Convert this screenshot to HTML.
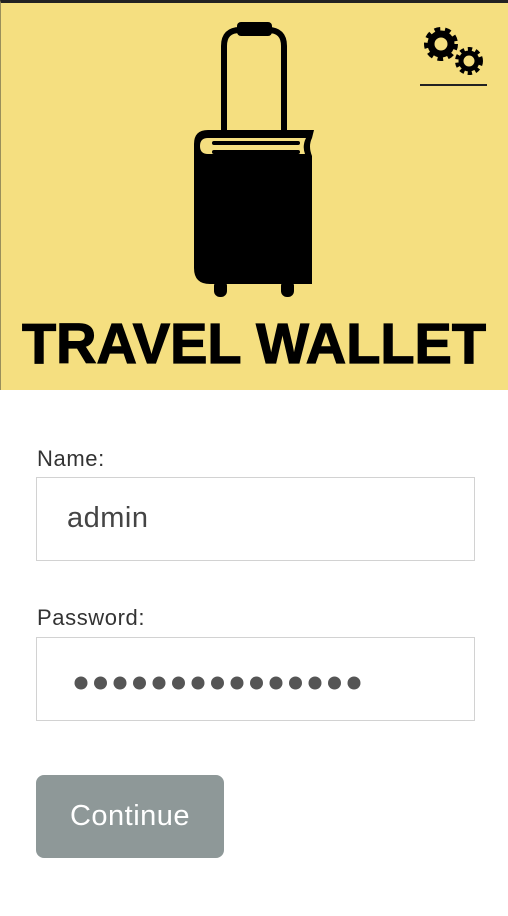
<!DOCTYPE html>
<html><head><style>
html,body{margin:0;padding:0;background:#fff;width:508px;height:916px;overflow:hidden;font-family:"Liberation Sans",sans-serif}
.hdr{position:absolute;left:0;top:0;width:508px;height:390px;background:#f5df80;border-top:3px solid #222;border-left:1px solid #9a8f5a;box-sizing:border-box}
.lbl{position:absolute;left:37px;font-size:22px;letter-spacing:0.6px;color:#333}
.inp{position:absolute;left:36px;width:439px;height:84px;border:1px solid #d2d2d2;box-sizing:border-box;background:#fff}
.btn{position:absolute;left:36px;top:775px;width:188px;height:83px;background:#8e9898;border-radius:8px;color:#fff;font-size:29px;letter-spacing:0.5px;text-align:center;line-height:83px}
</style></head><body>
<div class="hdr"></div>
<svg style="position:absolute;left:0;top:0" width="508" height="390">
  <path d="M224 130 V46 Q224 30 240 30 H268 Q284 30 284 46 V130" fill="none" stroke="#000" stroke-width="6"/>
  <rect x="237" y="22" width="35" height="14" rx="4" fill="#000"/>
  <path d="M200 130 H314 L312 138 Q308 146 312 156 V284 H210 Q194 284 194 268 V144 Q194 130 208 130 Z" fill="#000"/>
  <path d="M208 138 H306 Q302 146 305 154 H208 Q200 154 200 146 Q200 138 208 138 Z" fill="#f5df80"/>
  <line x1="214" y1="143" x2="298" y2="143" stroke="#000" stroke-width="4" stroke-linecap="round"/>
  <line x1="214" y1="152" x2="298" y2="152" stroke="#000" stroke-width="4" stroke-linecap="round"/>
  <rect x="214" y="280" width="13" height="17" rx="6" fill="#000"/>
  <rect x="281" y="280" width="13" height="17" rx="6" fill="#000"/>
  <g transform="translate(441,44)">
    <circle r="13" fill="none" stroke="#000" stroke-width="8" stroke-dasharray="5 4.2"/>
    <circle r="10" fill="none" stroke="#000" stroke-width="7"/>
  </g>
  <g transform="translate(469,61)">
    <circle r="11" fill="none" stroke="#000" stroke-width="6" stroke-dasharray="4 3.2"/>
    <circle r="8" fill="none" stroke="#000" stroke-width="5"/>
  </g>
  <rect x="420" y="84" width="67" height="2" fill="#222"/>
  <text x="22" y="363" font-family="Liberation Sans" font-weight="bold" font-size="57" textLength="464" lengthAdjust="spacingAndGlyphs" fill="#000" stroke="#000" stroke-width="1.2">TRAVEL WALLET</text>
</svg>
<div class="lbl" style="top:446px">Name:</div>
<div class="inp" style="top:477px"><span style="position:absolute;left:30px;top:24px;font-size:29px;letter-spacing:0.5px;color:#444">admin</span></div>
<div class="lbl" style="top:605px">Password:</div>
<div class="inp" style="top:637px">
<svg width="437" height="82" style="position:absolute;left:0;top:0">
<g fill="#555" transform="translate(5,0)">
<circle cx="39" cy="45" r="6.5"/><circle cx="58.5" cy="45" r="6.5"/><circle cx="78" cy="45" r="6.5"/><circle cx="97.5" cy="45" r="6.5"/><circle cx="117" cy="45" r="6.5"/><circle cx="136.5" cy="45" r="6.5"/><circle cx="156" cy="45" r="6.5"/><circle cx="175.5" cy="45" r="6.5"/><circle cx="195" cy="45" r="6.5"/><circle cx="214.5" cy="45" r="6.5"/><circle cx="234" cy="45" r="6.5"/><circle cx="253.5" cy="45" r="6.5"/><circle cx="273" cy="45" r="6.5"/><circle cx="292.5" cy="45" r="6.5"/><circle cx="312" cy="45" r="6.5"/>
</g></svg></div>
<div class="btn">Continue</div>
</body></html>
